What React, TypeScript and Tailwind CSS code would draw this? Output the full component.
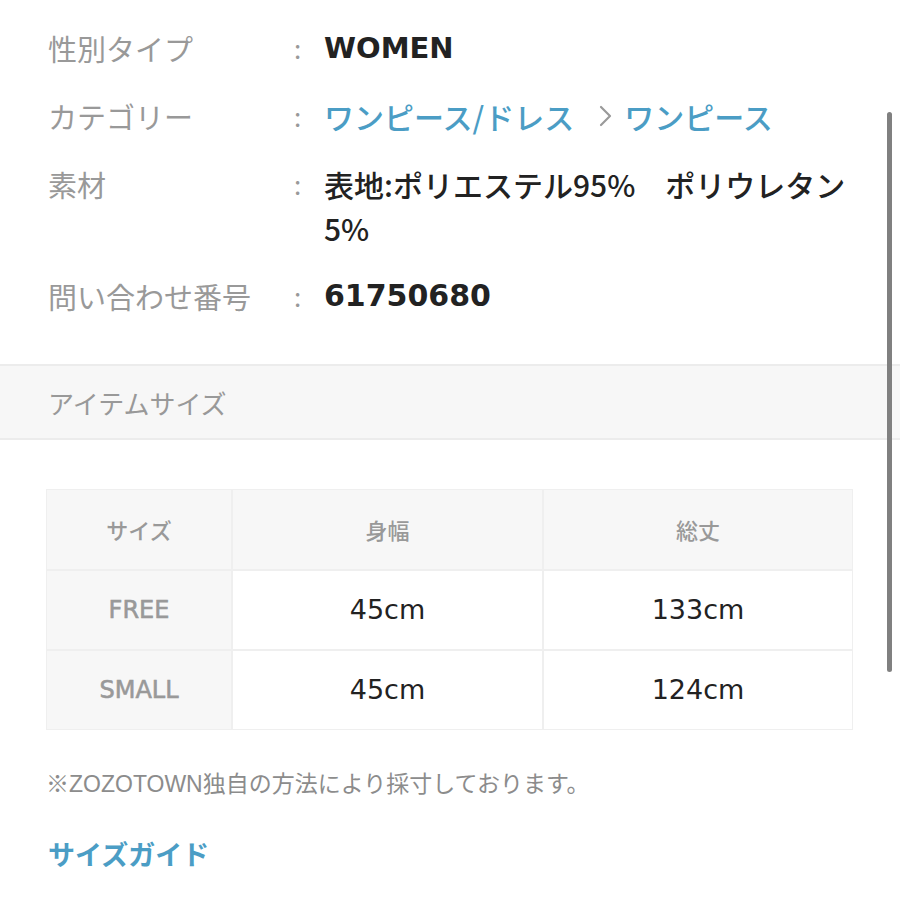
import React from 'react';

const font = { fontFamily: '"Noto Sans CJK JP", "Noto Sans", sans-serif' };
const latin = { fontFamily: '"DejaVu Sans", "Noto Sans CJK JP", sans-serif' };

type Row = { label: string; value: React.ReactNode };

const rows: Row[] = [
  {
    label: '性別タイプ',
    value: (
      <span className="text-[29px] font-bold text-[#222]" style={latin}>
        WOMEN
      </span>
    ),
  },
  {
    label: 'カテゴリー',
    value: (
      <span className="flex items-center font-medium text-[#4b9dc5]">
        ワンピース/ドレス
        <svg className="ml-[24px] mr-[12px]" width="14" height="22" viewBox="0 0 14 22" fill="none">
          <path d="M3 2l9 9-9 9" stroke="#9a9a9a" strokeWidth="2.2" strokeLinecap="round" strokeLinejoin="round" />
        </svg>
        ワンピース
      </span>
    ),
  },
  {
    label: '素材',
    value: <span className="font-medium text-[#222]">表地:ポリエステル95%　ポリウレタン5%</span>,
  },
  {
    label: '問い合わせ番号',
    value: (
      <span className="font-bold text-[#222]" style={latin}>
        61750680
      </span>
    ),
  },
];

const sizes = [
  { name: 'FREE', width: '45cm', length: '133cm' },
  { name: 'SMALL', width: '45cm', length: '124cm' },
];

export default function App() {
  return (
    <div className="relative min-h-[900px] w-[900px] overflow-hidden bg-white" style={font}>
      {/* spec rows */}
      <div className="flex flex-col gap-[24px] pt-[26px] pl-[48px] pr-[44px]">
        {rows.map((r) => (
          <div key={r.label} className="grid grid-cols-[246px_30px_1fr] leading-[44px]">
            <div className="h-[44px] text-[29px] text-[#999]">{r.label}</div>
            <div className="h-[44px] text-[26px] text-[#999]">:</div>
            <div className="flex min-h-[44px] items-start text-[30px]">{r.value}</div>
          </div>
        ))}
      </div>

      {/* section header */}
      <div className="mt-[46px] flex h-[76px] items-center border-y-2 border-[#ececec] bg-[#f7f7f7] pl-[48px]">
        <span className="text-[26px] text-[#999]">アイテムサイズ</span>
      </div>

      {/* size table */}
      <div className="ml-[46px] mt-[49px] grid w-[807px] grid-cols-[184px_309px_308px] gap-[2px] bg-[#efefef] p-[1px]">
        <div className="flex h-[79px] items-center justify-center bg-[#f7f7f7] text-[22px] font-medium text-[#999]">サイズ</div>
        <div className="flex h-[79px] items-center justify-center bg-[#f7f7f7] text-[22px] font-medium text-[#999]">身幅</div>
        <div className="flex h-[79px] items-center justify-center bg-[#f7f7f7] text-[22px] font-medium text-[#999]">総丈</div>
        {sizes.map((s) => (
          <React.Fragment key={s.name}>
            <div
              className="flex h-[78px] items-center justify-center bg-[#f7f7f7] text-[24px] text-[#999] [-webkit-text-stroke:0.6px_#999]"
              style={latin}
            >
              {s.name}
            </div>
            <div className="flex h-[78px] items-center justify-center bg-white text-[27px] text-[#222]" style={latin}>
              {s.width}
            </div>
            <div className="flex h-[78px] items-center justify-center bg-white text-[27px] text-[#222]" style={latin}>
              {s.length}
            </div>
          </React.Fragment>
        ))}
      </div>

      <p className="mt-[36px] pl-[46px] text-[23px] leading-[32px] text-[#8c8c8c]">
        ※<span style={{ fontFamily: '"Liberation Sans", sans-serif' }}>ZOZOTOWN</span>独自の方法により採寸しております。
      </p>

      <p className="mt-[36px] pl-[48px] text-[27px] font-bold leading-[36px] text-[#4b9dc5]">サイズガイド</p>

      {/* scrollbar overlay */}
      <div className="absolute left-[887px] top-[112px] h-[560px] w-[5px] rounded-full bg-[#808080]" />
    </div>
  );
}
